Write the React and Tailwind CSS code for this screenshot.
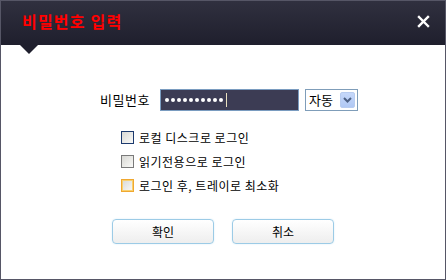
import React, { useState } from 'react';

const font = { fontFamily: '"Noto Sans CJK KR", "Noto Sans", sans-serif' };

const Checkbox = ({ label, variant }) => {
  const box =
    variant === 'focus'
      ? 'border-[#1c3a6e]'
      : variant === 'hover'
      ? 'border-[#f0a830] shadow-[inset_0_0_0_1px_#f8d070]'
      : 'border-[#7a7a7a]';
  return (
    <label className="flex items-center gap-[5px] h-[13px] cursor-default">
      <span className={`w-[13px] h-[13px] border ${box} bg-gradient-to-br from-[#d8d8d4] to-[#fafaf8]`} />
      <span className="text-[12px] leading-none text-black tracking-[0.5px]">{label}</span>
    </label>
  );
};

const Button = ({ children }) => (
  <button className="w-[102px] h-[25px] rounded-[4px] border border-[#9ccbe6] bg-gradient-to-b from-white to-[#eeeeee] text-[12px] text-black shadow-[0_0_2px_#d8ecf8]">
    {children}
  </button>
);

export default function App() {
  const [mode] = useState('자동');
  const dots = Array.from({ length: 10 });
  return (
    <div style={font} className="w-[446px] h-[280px] bg-white border border-[#565666] flex flex-col overflow-hidden">
      {/* Title bar */}
      <div className="relative h-[44px] shrink-0 bg-gradient-to-b from-[#30303f] to-[#1f1f2d] flex items-center justify-between pl-[21px] pr-[15px]">
        <span className="text-[16px] font-bold text-[#ff0000] tracking-[1.2px] -mt-[4px]">비밀번호 입력</span>
        <svg width="13" height="13" viewBox="0 0 13 13" className="-mt-[4px]">
          <path d="M2 2 L11 11 M11 2 L2 11" stroke="white" strokeWidth="2.4" strokeLinecap="square" />
        </svg>
        <span className="absolute left-[19px] top-[44px] w-0 h-0 border-l-[9px] border-r-[9px] border-t-[9px] border-l-transparent border-r-transparent border-t-[#1f1f2d]" />
      </div>

      {/* Body */}
      <div className="flex-1 flex flex-col pt-[44px]">
        <div className="flex items-center pl-[99px] h-[22px]">
          <span className="text-[13px] text-black w-[60px] tracking-[0.5px]">비밀번호</span>
          <div className="w-[139px] h-[22px] border border-[#7a9cc0] bg-[#3c3c54] flex items-center pl-[4px] gap-[2px]">
            {dots.map((_, i) => (
              <span key={i} className="w-[4px] h-[4px] rounded-full bg-white" />
            ))}
            <span className="ml-[1px] w-px h-[14px] bg-[#e8e0c0]" />
          </div>
          <div className="ml-[6px] w-[53px] h-[22px] border border-[#7f9db9] bg-white flex items-center justify-between pl-[3px] pr-[2px]">
            <span className="text-[13px] text-black">{mode}</span>
            <span className="w-[15px] h-[16px] rounded-[2px] bg-gradient-to-b from-[#c6d8fa] to-[#b0c8f4] border border-[#b8ccf0] flex items-center justify-center">
              <svg width="9" height="6" viewBox="0 0 9 6">
                <path d="M1 1 L4.5 4.5 L8 1" stroke="#4d6185" strokeWidth="2" fill="none" />
              </svg>
            </span>
          </div>
        </div>

        <div className="flex flex-col gap-[11px] pl-[120px] mt-[20px]">
          <Checkbox label="로컬 디스크로 로그인" variant="focus" />
          <Checkbox label="읽기전용으로 로그인" />
          <Checkbox label="로그인 후, 트레이로 최소화" variant="hover" />
        </div>

        <div className="flex gap-[18px] pl-[111px] mt-[27px]">
          <Button>확인</Button>
          <Button>취소</Button>
        </div>
      </div>
    </div>
  );
}
